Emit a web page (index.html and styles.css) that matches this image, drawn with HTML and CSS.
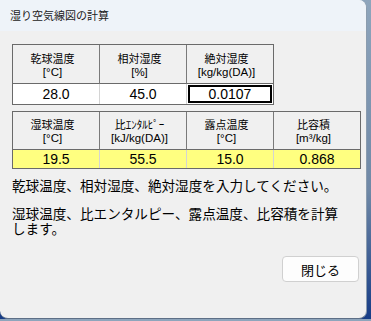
FILE: index.html
```html
<!DOCTYPE html>
<html lang="ja">
<head>
    <meta charset="UTF-8">
    <meta name="viewport" content="width=device-width, initial-scale=1.0">
    <title>湿り空気線図の計算</title>
    <link rel="stylesheet" href="styles.css">
</head>
<body>
    <div class="window">
        <div class="titlebar">湿り空気線図の計算</div>
        <div class="content">
            <div class="grid grid-input">
                <div class="head"><span>乾球温度</span><span class="unit">[°C]</span></div>
                <div class="head"><span>相対湿度</span><span class="unit">[%]</span></div>
                <div class="head"><span>絶対湿度</span><span class="unit">[kg/kg(DA)]</span></div>
                <div class="cell">28.0</div>
                <div class="cell">45.0</div>
                <div class="cell"><span class="focus">0.0107</span></div>
            </div>
            <div class="grid grid-output">
                <div class="head"><span>湿球温度</span><span class="unit">[°C]</span></div>
                <div class="head"><span>比ｴﾝﾀﾙﾋﾟｰ</span><span class="unit">[kJ/kg(DA)]</span></div>
                <div class="head"><span>露点温度</span><span class="unit">[°C]</span></div>
                <div class="head"><span>比容積</span><span class="unit">[m³/kg]</span></div>
                <div class="cell result">19.5</div>
                <div class="cell result">55.5</div>
                <div class="cell result">15.0</div>
                <div class="cell result">0.868</div>
            </div>
            <p class="note">乾球温度、相対湿度、絶対湿度を入力してください。</p>
            <p class="note">湿球温度、比エンタルピー、露点温度、比容積を計算します。</p>
            <div class="actions">
                <button class="btn">閉じる</button>
            </div>
        </div>
    </div>
</body>
</html>
```
FILE: styles.css
```css
html {
    background: linear-gradient(#8ea5bc, #6f88a6 60%, #163c86);
}

body {
    margin: 0;
    padding: 0;
    font-family: "Noto Sans CJK JP", "Liberation Sans", sans-serif;
    color: #000;
}

.window {
    width: 366px;
    height: 318px;
    background-color: #f0f0f0;
    border-right: 1px solid #8b9cae;
    border-bottom: 1px solid #5d6f86;
    border-radius: 0 8px 8px 8px;
    overflow: hidden;
    display: flex;
    flex-direction: column;
}

.titlebar {
    height: 31px;
    line-height: 30px;
    padding-left: 10px;
    font-size: 11px;
    color: #1b1b1b;
    background-color: #eef3f9;
}

.content {
    flex: 1;
    display: flex;
    flex-direction: column;
    padding: 13px 7px 0 12px;
}

.grid {
    display: grid;
    grid-template-rows: 39px 20px;
    border: 1px solid #6a6a6a;
    background-color: #f0f0f0;
}

.grid-input {
    width: 260px;
    grid-template-columns: 87px 87px 86px;
}

.grid-output {
    width: 347px;
    grid-template-columns: 87px 87px 87px 86px;
    grid-template-rows: 38px 18px;
    margin-top: 6px;
}

.head {
    display: flex;
    flex-direction: column;
    align-items: center;
    justify-content: center;
    text-align: center;
    padding-right: 7px;
    font-size: 11px;
    line-height: 16px;
    border-right: 1px solid #7a7a7a;
    border-bottom: 1px solid #6a6a6a;
}

.head span {
    display: block;
    height: 16px;
}

.head .unit {
    font-family: "Liberation Sans", sans-serif;
    font-size: 11.5px;
    line-height: 13px;
    height: 13px;
}

.cell {
    display: flex;
    align-items: center;
    justify-content: center;
    font-family: "Liberation Sans", sans-serif;
    font-size: 14px;
    background-color: #fff;
    border-right: 1px solid #d4d4d4;
}

.cell:last-child {
    border-right: none;
}

.grid-input .head:nth-child(3),
.grid-output .head:nth-child(4) {
    border-right: none;
}

.result {
    background-color: #ffff80;
}

.focus {
    align-self: stretch;
    flex: 1;
    margin: 1px;
    border: 2px solid #000;
    display: flex;
    align-items: center;
    justify-content: center;
    background-color: #fff;
}

.note {
    margin: 9px 0 0;
    width: 334px;
    font-size: 13.6px;
    line-height: 15px;
}

.note + .note {
    margin-top: 13px;
}

.actions {
    display: flex;
    justify-content: flex-end;
    margin-top: auto;
    margin-bottom: 36px;
}

.btn {
    width: 77px;
    height: 26px;
    font-family: "Noto Sans CJK JP", sans-serif;
    font-size: 13px;
    color: #000;
    background-color: #fdfdfd;
    border: 1px solid #d0d0d0;
    border-radius: 4px;
    padding: 0;
}
```
